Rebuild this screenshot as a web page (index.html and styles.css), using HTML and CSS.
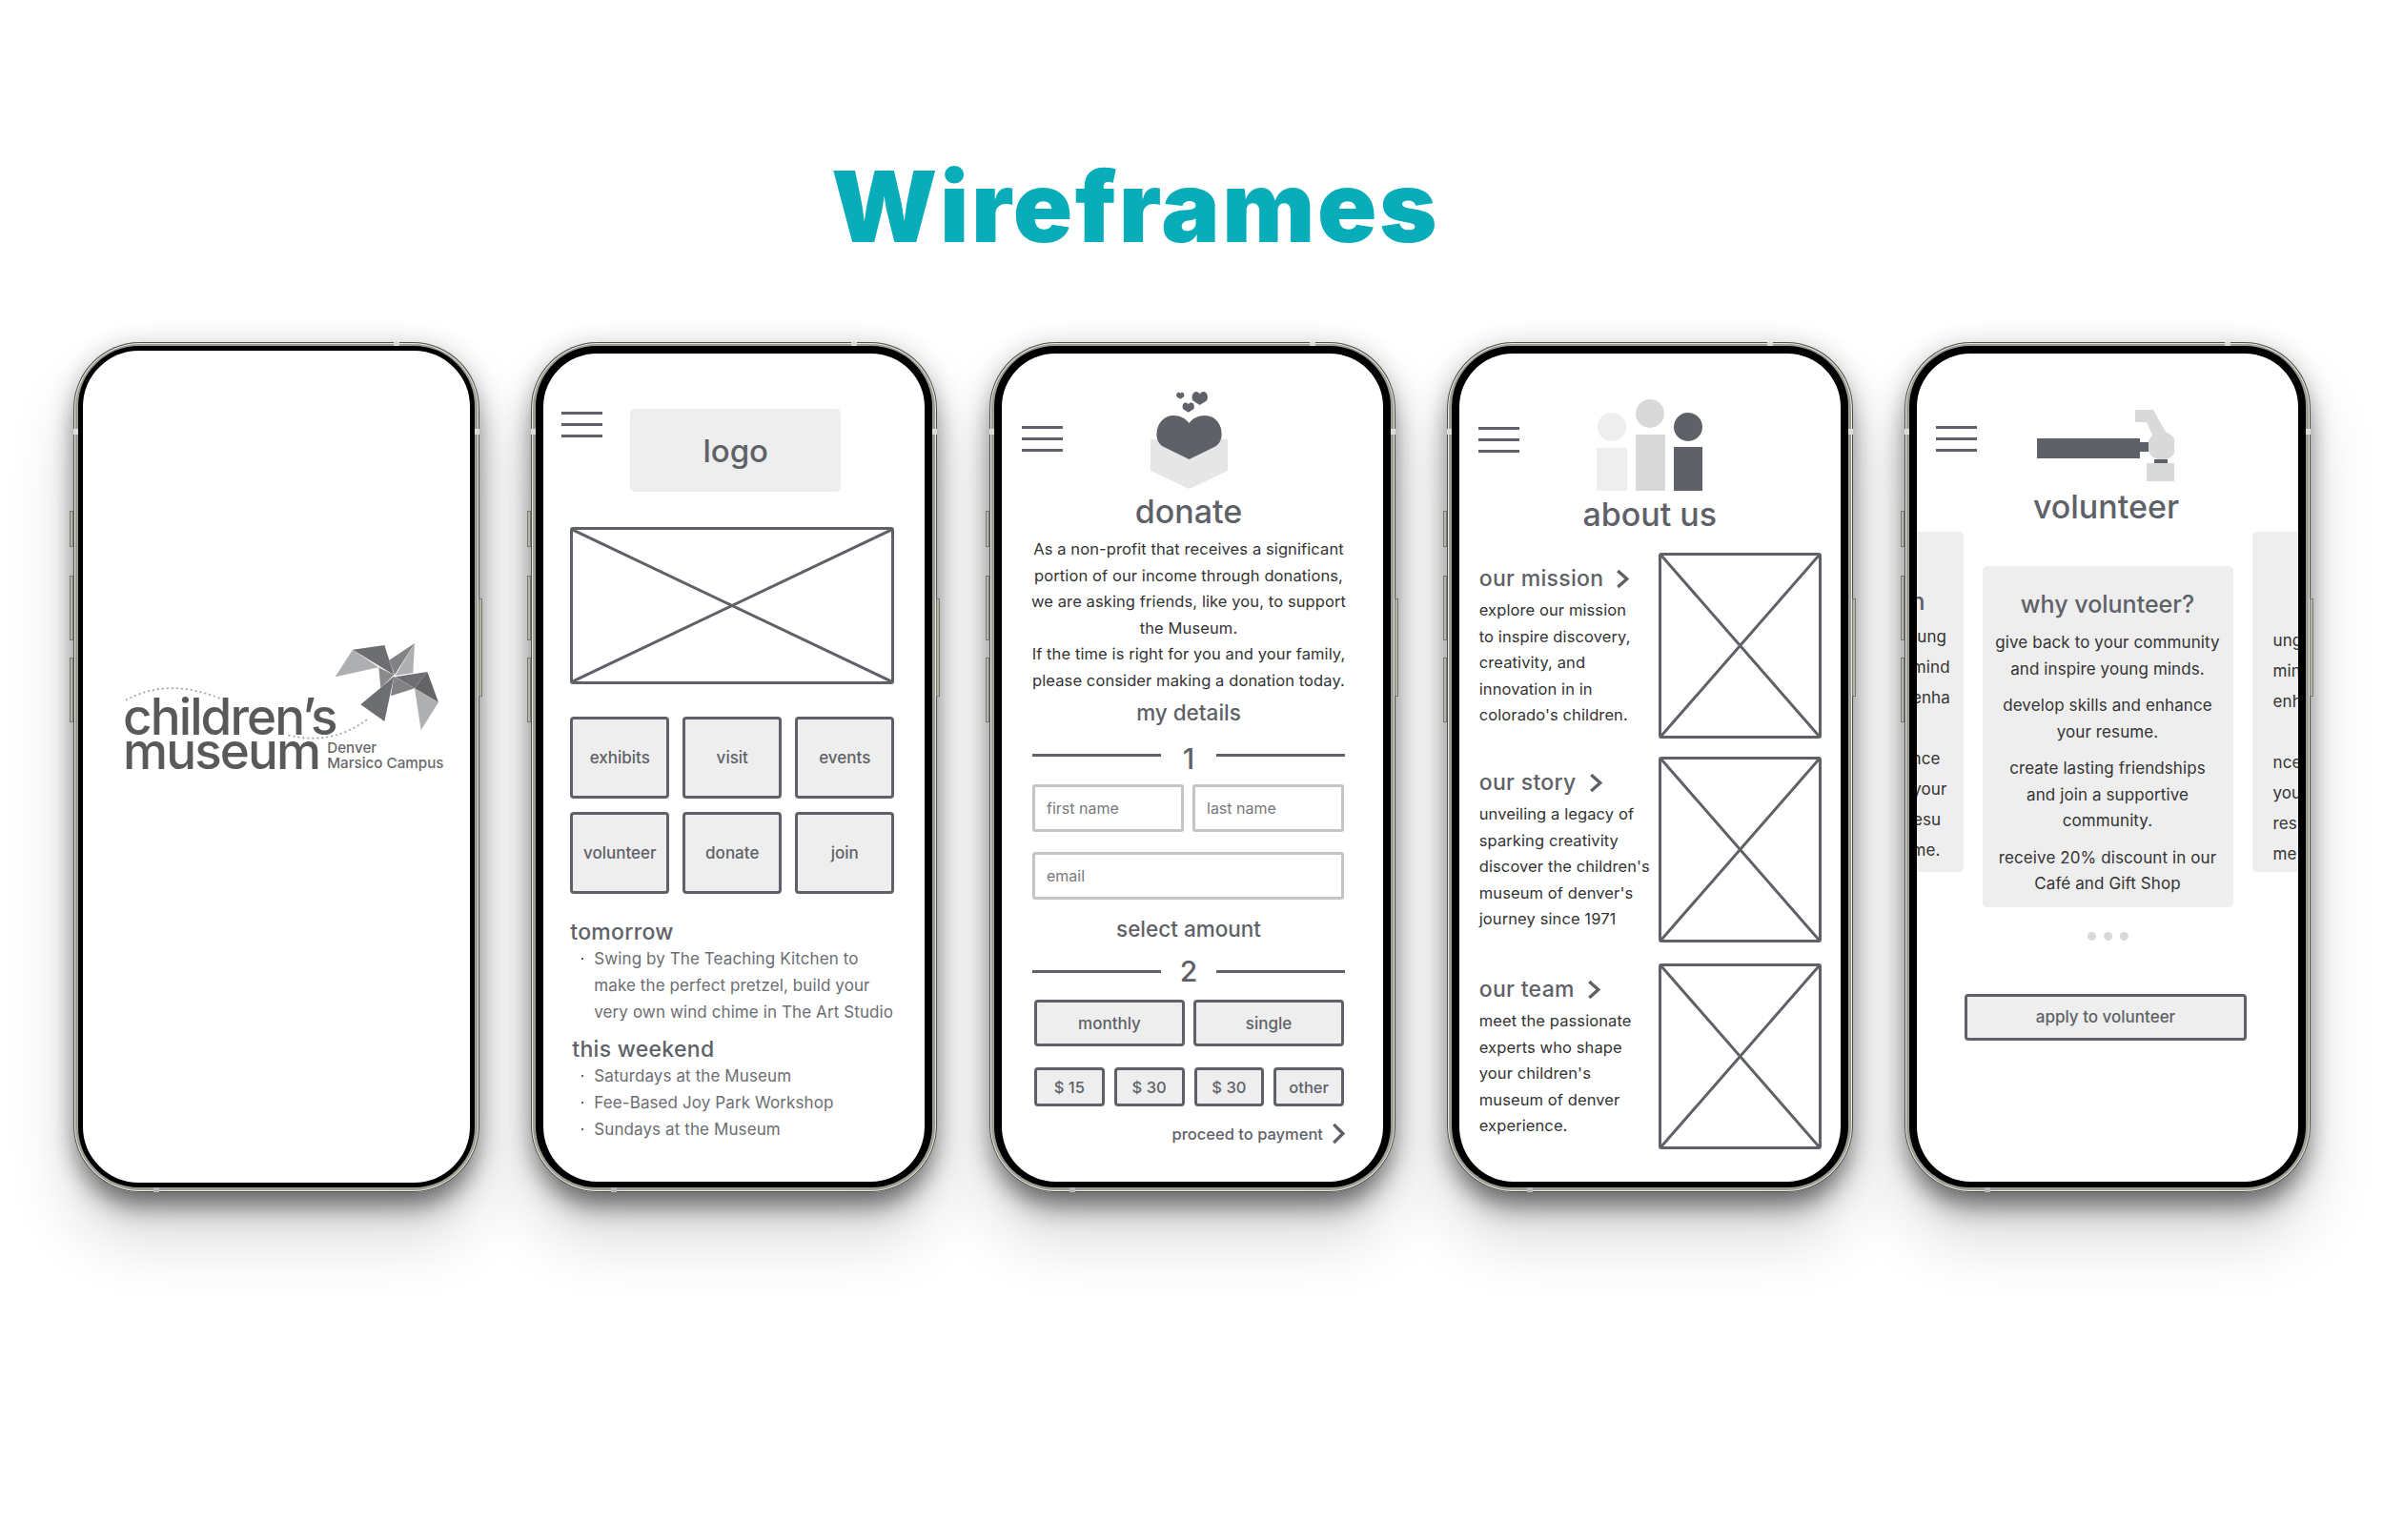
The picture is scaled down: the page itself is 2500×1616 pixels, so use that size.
FILE: index.html
```html
<!DOCTYPE html>
<html lang="en">
<head>
    <meta charset="UTF-8">
    <meta name="viewport" content="width=device-width, initial-scale=1.0">
    <title>Wireframes</title>
    <link rel="stylesheet" href="styles.css">
</head>
<body>
    <h1 class="title">Wireframes</h1>

    <div class="phones">
        <!-- splash -->
        <div class="phone">
            <span class="btn btn-a"></span><span class="btn btn-b"></span><span class="btn btn-c"></span><span class="btn btn-r"></span>
            <span class="band band-top"></span><span class="band band-l"></span><span class="band band-r"></span><span class="band band-bottom"></span>
            <div class="screen screen-splash">
                <div class="logo">
                    <svg class="logo-mark" viewBox="0 0 1110 540">
                        <path d="M68 250 Q200 180 360 245" fill="none" stroke="#a8a9ab" stroke-width="6" stroke-linecap="round" stroke-dasharray="1 14"/>
                        <path d="M580 362 Q720 395 830 308" fill="none" stroke="#a8a9ab" stroke-width="6" stroke-linecap="round" stroke-dasharray="1 14"/>
                        <polygon points="725,178 780,92 862,148" fill="#aeafb1"/>
                        <polygon points="780,92 880,78 910,172" fill="#6d6e71"/>
                        <polygon points="862,148 910,172 868,212" fill="#8a8b8d"/>
                        <polygon points="895,125 975,72 912,172" fill="#808284"/>
                        <polygon points="975,72 970,165 914,174" fill="#aeafb1"/>
                        <polygon points="914,178 1015,162 975,214" fill="#6d6e71"/>
                        <polygon points="1015,162 1050,258 975,214" fill="#636466"/>
                        <polygon points="975,214 1050,258 995,345" fill="#aeafb1"/>
                        <polygon points="910,176 975,214 900,238" fill="#808284"/>
                        <polygon points="805,265 868,212 910,176 880,318" fill="#6d6e71"/>
                    </svg>
                    <div class="logo-text">
                        <div class="logo-name">children’s</div>
                        <div class="logo-row">
                            <div class="logo-name">museum</div>
                            <div class="logo-campus">Denver<br>Marsico Campus</div>
                        </div>
                    </div>
                </div>
            </div>
        </div>

        <!-- home -->
        <div class="phone">
            <span class="btn btn-a"></span><span class="btn btn-b"></span><span class="btn btn-c"></span><span class="btn btn-r"></span>
            <span class="band band-top"></span><span class="band band-l"></span><span class="band band-r"></span><span class="band band-bottom"></span>
            <div class="screen">
                <div class="home-top">
                    <div class="burger"><span></span><span></span><span></span></div>
                    <div class="logo-box">logo</div>
                </div>
                <div class="ph home-hero">
                    <svg viewBox="0 0 100 100" preserveAspectRatio="none"><path d="M0 0L100 100M100 0L0 100"/></svg>
                </div>
                <div class="home-grid">
                    <div class="box">exhibits</div>
                    <div class="box">visit</div>
                    <div class="box">events</div>
                    <div class="box">volunteer</div>
                    <div class="box">donate</div>
                    <div class="box">join</div>
                </div>
                <div class="home-news">
                    <h3>tomorrow</h3>
                    <ul>
                        <li>Swing by The Teaching Kitchen to<br>make the perfect pretzel, build your<br>very own wind chime in The Art Studio</li>
                    </ul>
                    <h3 class="news-next">this weekend</h3>
                    <ul>
                        <li>Saturdays at the Museum</li>
                        <li>Fee-Based Joy Park Workshop</li>
                        <li>Sundays at the Museum</li>
                    </ul>
                </div>
            </div>
        </div>

        <!-- donate -->
        <div class="phone">
            <span class="btn btn-a"></span><span class="btn btn-b"></span><span class="btn btn-c"></span><span class="btn btn-r"></span>
            <span class="band band-top"></span><span class="band band-l"></span><span class="band band-r"></span><span class="band band-bottom"></span>
            <div class="screen">
                <div class="head head-donate">
                    <div class="burger"><span></span><span></span><span></span></div>
                    <div class="head-mid">
                        <svg class="icon-donate" viewBox="0 0 81 102">
                            <defs>
                                <path id="heart" d="M40.5 71L14 58C8 55 6 49 6.5 43C7.5 32 15 25 24 25C31 25 37 28 40.5 33C44 28 50 25 57 25C66 25 74 32 74.5 43C75 49 73 55 67 58Z"/>
                            </defs>
                            <polygon points="0,50 81,50 81,83 40.5,102 0,83" fill="#e6e6e6"/>
                            <use href="#heart" fill="#5f6168"/>
                            <use href="#heart" fill="#5f6168" transform="translate(42 -7.4) scale(.24 .3)"/>
                            <use href="#heart" fill="#5f6168" transform="translate(32.4 6.1) scale(.18 .22)"/>
                            <use href="#heart" fill="#5f6168" transform="translate(26.4 -2.9) scale(.12 .15)"/>
                        </svg>
                        <h2>donate</h2>
                    </div>
                </div>
                <p class="donate-copy">As a non-profit that receives a significant<br>portion of our income through donations,<br>we are asking friends, like you, to support<br>the Museum.<br>If the time is right for you and your family,<br>please consider making a donation today.</p>
                <h3 class="step-title">my details</h3>
                <div class="step step-first"><i></i><b>1</b><i></i></div>
                <div class="form-row">
                    <div class="field">first name</div>
                    <div class="field">last name</div>
                </div>
                <div class="form-row form-row-gap">
                    <div class="field">email</div>
                </div>
                <h3 class="step-title step-title-gap">select amount</h3>
                <div class="step"><i></i><b>2</b><i></i></div>
                <div class="form-row form-row-btns">
                    <div class="box box-toggle">monthly</div>
                    <div class="box box-toggle">single</div>
                </div>
                <div class="form-row form-row-btns amounts">
                    <div class="box box-amount">$ 15</div>
                    <div class="box box-amount">$ 30</div>
                    <div class="box box-amount">$ 30</div>
                    <div class="box box-amount">other</div>
                </div>
                <div class="proceed">
                    proceed to payment
                    <svg class="chev chev-lg" viewBox="0 0 14 24"><path d="M2 2L12 12L2 22"/></svg>
                </div>
            </div>
        </div>

        <!-- about us -->
        <div class="phone">
            <span class="btn btn-a"></span><span class="btn btn-b"></span><span class="btn btn-c"></span><span class="btn btn-r"></span>
            <span class="band band-top"></span><span class="band band-l"></span><span class="band band-r"></span><span class="band band-bottom"></span>
            <div class="screen">
                <div class="head head-about">
                    <div class="burger"><span></span><span></span><span></span></div>
                    <div class="head-mid">
                        <svg class="icon-about" viewBox="0 0 111 96">
                            <circle cx="16" cy="29" r="15" fill="#eeeeee"/>
                            <rect x="0" y="51" width="32" height="45" fill="#eeeeee"/>
                            <circle cx="56" cy="15" r="15" fill="#d9d9d9"/>
                            <rect x="41" y="37" width="31" height="59" fill="#d9d9d9"/>
                            <circle cx="96" cy="29" r="15" fill="#5f6168"/>
                            <rect x="81" y="50" width="30" height="46" fill="#5f6168"/>
                        </svg>
                        <h2>about us</h2>
                    </div>
                </div>
                <div class="about-list">
                    <div class="about-item">
                        <div class="about-text">
                            <h3>our mission <svg class="chev" viewBox="0 0 14 22"><path d="M2 2L12 11L2 20"/></svg></h3>
                            <p>explore our mission<br>to inspire discovery,<br>creativity, and<br>innovation in in<br>colorado's children.</p>
                        </div>
                        <div class="ph about-ph">
                            <svg viewBox="0 0 100 100" preserveAspectRatio="none"><path d="M0 0L100 100M100 0L0 100"/></svg>
                        </div>
                    </div>
                    <div class="about-item">
                        <div class="about-text">
                            <h3>our story <svg class="chev" viewBox="0 0 14 22"><path d="M2 2L12 11L2 20"/></svg></h3>
                            <p>unveiling a legacy of<br>sparking creativity<br>discover the children's<br>museum of denver's<br>journey since 1971</p>
                        </div>
                        <div class="ph about-ph">
                            <svg viewBox="0 0 100 100" preserveAspectRatio="none"><path d="M0 0L100 100M100 0L0 100"/></svg>
                        </div>
                    </div>
                    <div class="about-item">
                        <div class="about-text">
                            <h3>our team <svg class="chev" viewBox="0 0 14 22"><path d="M2 2L12 11L2 20"/></svg></h3>
                            <p>meet the passionate<br>experts who shape<br>your children's<br>museum of denver<br>experience.</p>
                        </div>
                        <div class="ph about-ph">
                            <svg viewBox="0 0 100 100" preserveAspectRatio="none"><path d="M0 0L100 100M100 0L0 100"/></svg>
                        </div>
                    </div>
                </div>
            </div>
        </div>

        <!-- volunteer -->
        <div class="phone">
            <span class="btn btn-a"></span><span class="btn btn-b"></span><span class="btn btn-c"></span><span class="btn btn-r"></span>
            <span class="band band-top"></span><span class="band band-l"></span><span class="band band-r"></span><span class="band band-bottom"></span>
            <div class="screen">
                <div class="head head-volunteer">
                    <div class="burger"><span></span><span></span><span></span></div>
                    <div class="head-mid">
                        <svg class="icon-volunteer" viewBox="0 0 144 75">
                            <polygon points="103,0 122,0 136,25 126,38 115,13 103,13" fill="#d9d9d9"/>
                            <circle cx="131" cy="38" r="15" fill="#d9d9d9"/>
                            <rect x="108" y="34" width="9" height="10" fill="#5f6168"/>
                            <rect x="0" y="30" width="108" height="21" fill="#5f6168"/>
                            <rect x="123" y="52" width="14" height="5" fill="#5f6168"/>
                            <rect x="115" y="56" width="29" height="19" fill="#d9d9d9"/>
                        </svg>
                        <h2>volunteer</h2>
                    </div>
                </div>
                <div class="carousel">
                    <div class="card card-side card-left">
                        <h3>what to do with</h3>
                        <p>give back and inspire young<br>and help every curious&nbsp; mind<br>develop your skills and&nbsp; enha</p>
                        <p>build your own experience<br>and gain even more for your<br>add this work on your resu<br>add it all to&nbsp;&nbsp;&nbsp; your resume.</p>
                    </div>
                    <div class="card">
                        <h3>why volunteer?</h3>
                        <p>give back to your community<br>and inspire young minds.</p>
                        <p>develop skills and enhance<br>your resume.</p>
                        <p>create lasting friendships<br>and join a supportive<br>community.</p>
                        <p>receive 20% discount in our<br>Café and Gift Shop</p>
                    </div>
                    <div class="card card-side card-right">
                        <p>ung<br>min<br>enh</p>
                        <p>nce<br>you<br>res<br>me</p>
                    </div>
                </div>
                <div class="dots"><span></span><span></span><span></span></div>
                <div class="box box-apply">apply to volunteer</div>
            </div>
        </div>
    </div>
</body>
</html>
```

FILE: styles.css
```css
* {
    box-sizing: border-box;
}

body {
    font-family: Inter, "Noto Sans", sans-serif;
    margin: 0;
    width: 2500px;
    height: 1616px;
    background-color: #fff;
    color: #5f6168;
    overflow: hidden;
}

h2, h3, p, ul {
    margin: 0;
    padding: 0;
}

.title {
    margin: 0;
    padding: 157px 0 0 872px;
    height: 281px;
    font-size: 103px;
    line-height: 120px;
    font-weight: 900;
    letter-spacing: 2.5px;
    color: #09adba;
}

.phones {
    display: flex;
    gap: 54.25px;
    margin: 78px 0 0 77px;
}

/* phone body */
.phone {
    position: relative;
    flex: none;
    width: 426px;
    height: 892px;
    padding: 4px 5px 5px;
    border-radius: 70px;
    background-color: #9c9c92;
    box-shadow: inset 0 0 0 1px #4f4f4b, inset 0 0 0 2px #e9e9e4, 0 20px 28px -6px rgba(0, 0, 0, 0.5), 0 46px 70px rgba(0, 0, 0, 0.16), 0 0 26px rgba(0, 0, 0, 0.14);
}

.screen {
    width: 100%;
    height: 100%;
    border: 8px solid #000;
    border-bottom-width: 6px;
    border-radius: 64px;
    background-color: #fff;
    overflow: hidden;
}

.btn {
    position: absolute;
    width: 4px;
    background-color: #b5b5ad;
    border: 1px solid #77776f;
}

.btn-a { left: -4px; top: 177px; height: 38px; }
.btn-b { left: -4px; top: 245px; height: 68px; }
.btn-c { left: -4px; top: 331px; height: 68px; }
.btn-r { right: -3px; top: 269px; height: 103px; }

.band {
    position: absolute;
    background-color: #dcdcd8;
}

.band-top { left: 336px; top: 0; width: 6px; height: 4px; }
.band-l { left: 0; top: 91px; width: 5px; height: 6px; }
.band-r { right: 0; top: 91px; width: 5px; height: 6px; }
.band-bottom { left: 84px; bottom: 0; width: 6px; height: 5px; background-color: #b3b8ba; }

.burger {
    display: flex;
    flex-direction: column;
    gap: 9px;
    width: 43px;
}

.burger span {
    height: 3px;
    background-color: #5f6168;
}

/* wireframe bits */
.ph {
    flex: none;
    border: 3px solid #5f6168;
    border-radius: 3px;
}

.ph svg {
    display: block;
    width: 100%;
    height: 100%;
}

.ph path {
    fill: none;
    stroke: #5f6168;
    stroke-width: 3px;
    vector-effect: non-scaling-stroke;
}

.box {
    display: flex;
    align-items: center;
    justify-content: center;
    background-color: #eee;
    border: 3px solid #5f6168;
    border-radius: 4px;
    font-size: 17px;
    font-weight: 500;
}

.chev {
    fill: none;
    stroke: #5f6168;
    stroke-width: 3.5;
    width: 14px;
    height: 21px;
}

/* splash */
.screen-splash {
    border-width: 5px;
    padding: 283px 0 0 23px;
}

.logo {
    position: relative;
    width: 370px;
    height: 180px;
}

.logo-mark {
    position: absolute;
    left: 0;
    top: 0;
    width: 370px;
    height: 180px;
}

.logo-text {
    padding: 83px 0 0 19px;
    color: #58595b;
}

.logo-name {
    font-size: 53px;
    line-height: 36px;
    font-weight: 500;
    letter-spacing: -1.9px;
}

.logo-row {
    display: flex;
}

.logo-campus {
    margin: 7px 0 0 8px;
    font-size: 15.2px;
    line-height: 16px;
    font-weight: 500;
    white-space: nowrap;
    color: #67686b;
}

/* home */
.home-top {
    display: flex;
    padding: 58px 0 0 19px;
}

.home-top .burger {
    margin-top: 3px;
}

.logo-box {
    display: flex;
    align-items: center;
    justify-content: center;
    width: 221px;
    height: 87px;
    margin-left: 29px;
    background-color: #eee;
    border-radius: 5px;
    font-size: 33px;
    font-weight: 500;
}

.home-hero {
    width: 340px;
    height: 165px;
    margin: 37px 0 0 28px;
}

.home-grid {
    display: grid;
    grid-template-columns: repeat(3, 104px);
    grid-auto-rows: 86px;
    gap: 14px;
    margin: 34px 0 0 28px;
}

.home-news {
    margin: 26px 0 0 28px;
}

.home-news h3 {
    font-size: 23px;
    line-height: 28px;
    font-weight: 500;
    letter-spacing: 0.3px;
}

.home-news .news-next {
    margin: 11px 0 0 2px;
}

.home-news ul {
    list-style: none;
}

.home-news li {
    position: relative;
    padding-left: 25px;
    font-size: 17px;
    line-height: 28px;
    letter-spacing: 0.1px;
    color: #6c6d72;
    white-space: nowrap;
}

.home-news li::before {
    content: "";
    position: absolute;
    left: 12px;
    top: 13px;
    width: 2px;
    height: 2px;
    background-color: #5f6168;
}

/* page heads */
.head {
    display: grid;
    grid-template-columns: 1fr auto 1fr;
}

.head-mid {
    display: flex;
    flex-direction: column;
    align-items: center;
}

.head-mid svg {
    display: block;
}

.head h2 {
    font-size: 34px;
    line-height: 40px;
    font-weight: 500;
}

.head-donate {
    padding: 40px 7px 0 0;
}

.head-donate .burger {
    margin: 36px 0 0 21.5px;
}

.icon-donate {
    width: 81px;
    height: 102px;
    margin-bottom: 4px;
}

.head-about {
    padding-top: 48px;
}

.head-about .burger {
    margin: 29px 0 0 20px;
}

.icon-about {
    width: 111px;
    height: 96px;
    margin-bottom: 5px;
}

.head-volunteer {
    padding: 59px 3px 0 0;
}

.head-volunteer .burger {
    margin: 17px 0 0 20px;
}

.icon-volunteer {
    width: 144px;
    height: 75px;
    margin-bottom: 7px;
}

/* donate */
.donate-copy {
    margin: 6px 7px 0 0;
    text-align: center;
    font-size: 16.5px;
    line-height: 27.5px;
    letter-spacing: 0.1px;
    color: #333;
    white-space: nowrap;
}

.step-title {
    margin: 6px 7px 0 0;
    text-align: center;
    font-size: 22.5px;
    line-height: 28px;
    font-weight: 500;
}

.step-title-gap {
    margin-top: 17px;
}

.step {
    display: flex;
    align-items: center;
    width: 328px;
    height: 30px;
    margin: 15px 0 0 32.5px;
}

.step i {
    flex: none;
    width: 135px;
    height: 3px;
    background-color: #5f6168;
}

.step b {
    flex: 1;
    text-align: center;
    font-size: 30px;
    font-weight: 500;
}

.step-first b {
    margin-top: 8px;
}

.form-row {
    display: flex;
    gap: 9px;
    width: 327px;
    margin: 16px 0 0 32.5px;
}

.form-row-gap {
    margin-top: 21px;
}

.form-row-btns {
    width: 325px;
    margin: 15px 0 0 34.5px;
}

.amounts {
    gap: 10px;
    margin-top: 22px;
}

.field {
    flex: 1;
    height: 50px;
    padding: 0 12px;
    line-height: 44px;
    border: 3px solid #c4c4c4;
    border-radius: 3px;
    font-size: 16px;
    color: #77787c;
}

.box-toggle {
    flex: 1;
    height: 49px;
}

.box-amount {
    flex: 1;
    height: 41px;
    font-size: 16.5px;
}

.proceed {
    display: flex;
    align-items: center;
    justify-content: flex-end;
    gap: 9px;
    width: 360.5px;
    height: 23px;
    margin-top: 17px;
    font-size: 16.5px;
    font-weight: 500;
}

.chev-lg {
    height: 23px;
}

/* about */
.about-list {
    display: flex;
    flex-direction: column;
    gap: 19px;
    margin-top: 20px;
}

.about-item {
    display: flex;
    justify-content: space-between;
    padding: 0 20px 0 21px;
}

.about-item:last-child {
    margin-top: 3px;
}

.about-text {
    padding-top: 13px;
}

.about-text h3 {
    display: flex;
    align-items: center;
    gap: 13px;
    font-size: 23px;
    line-height: 28px;
    font-weight: 500;
    letter-spacing: 0.3px;
}

.about-text p {
    margin-top: 6px;
    font-size: 16.5px;
    line-height: 27.5px;
    letter-spacing: 0.1px;
    color: #333;
    white-space: nowrap;
}

.about-ph {
    width: 171px;
    height: 195px;
}

/* volunteer */
.carousel {
    display: flex;
    justify-content: center;
    align-items: flex-start;
    gap: 20px;
    overflow: hidden;
}

.card {
    flex: none;
    width: 263px;
    margin-top: 42px;
    padding: 26px 0 10px;
    background-color: #eee;
    border-radius: 5px;
    text-align: center;
    white-space: nowrap;
}

.card h3 {
    font-size: 25px;
    line-height: 28px;
    font-weight: 500;
}

.card p {
    margin-top: 11px;
    font-size: 17px;
    line-height: 27.5px;
    letter-spacing: 0.1px;
    color: #333;
}

.card h3 + p {
    margin-top: 13px;
}

.card-side {
    height: 357px;
    margin-top: 6px;
    padding: 59px 0 0;
}

.card-side p {
    margin-top: 32px;
    line-height: 32px;
}

.card-side h3 + p {
    margin-top: 7px;
}

.card-right {
    padding: 98px 0 0 22px;
    text-align: left;
}

.card-right p:first-child {
    margin-top: 0;
}

.dots {
    display: flex;
    justify-content: center;
    gap: 8px;
    margin-top: 26px;
}

.dots span {
    width: 9px;
    height: 9px;
    border-radius: 50%;
    background-color: #d9d9d9;
}

.box-apply {
    width: 296px;
    height: 49px;
    margin: 56px 0 0 50px;
}
```
